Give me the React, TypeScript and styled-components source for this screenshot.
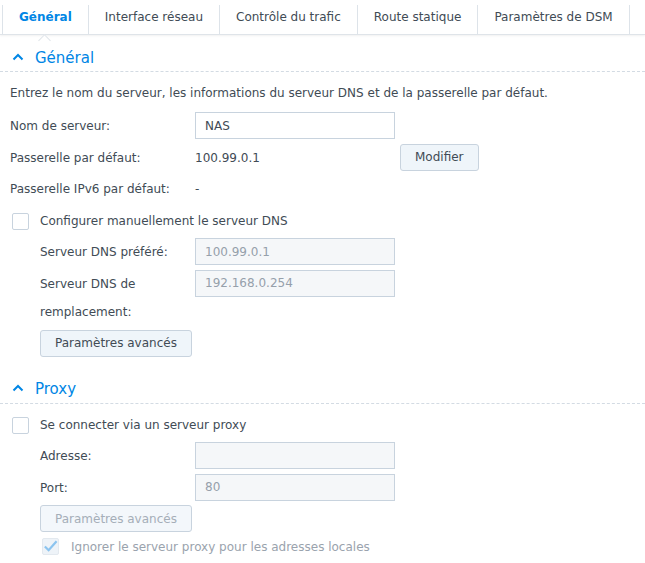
import React from 'react';
import styled, { createGlobalStyle } from 'styled-components';

const TEXT = '#414b55';
const BLUE = '#0086e5';
const BORDER = '#c8d3de';

const GlobalStyle = createGlobalStyle`
    body {
        margin: 0;
        background: #fff;
        font-family: 'DejaVu Sans', Verdana, sans-serif;
        font-size: 12px;
        color: ${TEXT};
    }
`;

const tabs = ['Général', 'Interface réseau', 'Contrôle du trafic', 'Route statique', 'Paramètres de DSM'];

const Chevron: React.FC = () => (
    <svg width="12" height="8" viewBox="0 0 12 8">
        <path d="M1.5 6.5 L6 2 L10.5 6.5" fill="none" stroke={BLUE} strokeWidth="2" />
    </svg>
);

const Check: React.FC = () => (
    <svg width="16" height="14" viewBox="0 0 16 14">
        <path d="M2 7.5 L6 11.5 L14.5 2" fill="none" stroke="#8cc4ef" strokeWidth="2.4" />
    </svg>
);

const App: React.FC = () => {
    return (
        <>
            <GlobalStyle />
            <Page>
                <TabBar>
                    {tabs.map((tab, i) => (
                        <Tab key={tab} active={i === 0}>
                            {tab}
                        </Tab>
                    ))}
                </TabBar>

                <SectionHeader>
                    <Chevron />
                    <span>Général</span>
                </SectionHeader>
                <Body>
                    <Description>
                        Entrez le nom du serveur, les informations du serveur DNS et de la passerelle par défaut.
                    </Description>
                    <Rows>
                        <Row>
                            <Label>Nom de serveur:</Label>
                            <Input defaultValue="NAS" />
                        </Row>
                        <Row>
                            <Label>Passerelle par défaut:</Label>
                            <Value>100.99.0.1</Value>
                            <Button>Modifier</Button>
                        </Row>
                        <Row>
                            <Label>Passerelle IPv6 par défaut:</Label>
                            <Value>-</Value>
                        </Row>
                        <Row>
                            <CheckBox />
                            <CheckLabel>Configurer manuellement le serveur DNS</CheckLabel>
                        </Row>
                        <Row indent>
                            <Label indent>Serveur DNS préféré:</Label>
                            <Input disabled defaultValue="100.99.0.1" />
                        </Row>
                        <Row indent>
                            <Label indent>Serveur DNS de remplacement:</Label>
                            <Input disabled defaultValue="192.168.0.254" />
                        </Row>
                        <Row indent>
                            <Button wide>Paramètres avancés</Button>
                        </Row>
                    </Rows>
                </Body>

                <SectionHeader spaced>
                    <Chevron />
                    <span>Proxy</span>
                </SectionHeader>
                <Body>
                    <Rows>
                        <Row>
                            <CheckBox />
                            <CheckLabel>Se connecter via un serveur proxy</CheckLabel>
                        </Row>
                        <Row indent>
                            <Label indent>Adresse:</Label>
                            <Input disabled defaultValue="" />
                        </Row>
                        <Row indent>
                            <Label indent>Port:</Label>
                            <Input disabled defaultValue="80" />
                        </Row>
                        <Row indent>
                            <Button wide disabled>
                                Paramètres avancés
                            </Button>
                        </Row>
                        <Row indent short>
                            <CheckBox checked disabled>
                                <Check />
                            </CheckBox>
                            <CheckLabel disabled>Ignorer le serveur proxy pour les adresses locales</CheckLabel>
                        </Row>
                    </Rows>
                </Body>
            </Page>
        </>
    );
};

const Page = styled.div`
    width: 645px;
    height: 563px;
    overflow: hidden;
`;

const TabBar = styled.div`
    display: flex;
    height: 34px;
    padding-left: 2px;
    border-bottom: 1px solid #dfe4e9;
    box-shadow: 0 1px 2px rgba(0, 0, 0, 0.06);
`;

const Tab = styled.div<{ active?: boolean }>`
    position: relative;
    display: flex;
    align-items: center;
    padding: 0 16px 5px;
    margin: 5px 0 0;
    height: 24px;
    border-left: 1px solid #dde3e9;
    color: ${(p) => (p.active ? BLUE : TEXT)};
    font-weight: ${(p) => (p.active ? 700 : 400)};
    white-space: nowrap;
    &:last-child {
        border-right: 1px solid #dde3e9;
    }
    ${(p) =>
        p.active
            ? `
        &::after {
            content: '';
            position: absolute;
            left: 50%;
            bottom: -11px;
            width: 8px;
            height: 8px;
            margin-left: -5px;
            background: #fff;
            border-left: 1px solid #dfe4e9;
            border-top: 1px solid #dfe4e9;
            transform: rotate(45deg);
        }
    `
            : ''}
`;

const SectionHeader = styled.div<{ spaced?: boolean }>`
    display: flex;
    align-items: center;
    gap: 11px;
    height: 27px;
    padding-top: 1px;
    margin-top: ${(p) => (p.spaced ? '17px' : '8px')};
    padding-left: 12px;
    border-bottom: 1px dashed #d3dbe3;
    color: ${BLUE};
    font-size: 15px;
    svg {
        margin-top: -2px;
    }
`;

const Body = styled.div`
    padding: 7px 10px 0;
`;

const Description = styled.div`
    line-height: 28px;
    margin-bottom: 5px;
`;

const Rows = styled.div`
    display: flex;
    flex-direction: column;
    gap: 3.6px;
`;

const Row = styled.div<{ indent?: boolean; short?: boolean }>`
    display: flex;
    align-items: flex-start;
    min-height: ${(p) => (p.short ? '22px' : '28px')};
    padding-left: ${(p) => (p.indent ? '30px' : '0')};
`;

const Label = styled.div<{ indent?: boolean }>`
    width: ${(p) => (p.indent ? '155px' : '185px')};
    flex-shrink: 0;
    line-height: 28px;
`;

const Value = styled.div`
    line-height: 28px;
    width: 205px;
`;

const Input = styled.input`
    box-sizing: border-box;
    width: 200px;
    height: 27px;
    padding: 0 9px;
    border: 1px solid ${BORDER};
    border-radius: 0;
    background: #fff;
    font-family: inherit;
    font-size: 12px;
    color: ${TEXT};
    outline: none;
    &:disabled {
        background: #f5f7f9;
        color: #96a0ab;
    }
`;

const Button = styled.button<{ wide?: boolean }>`
    box-sizing: border-box;
    height: 27px;
    padding: 0 14px;
    min-width: ${(p) => (p.wide ? '151px' : '78px')};
    border: 1px solid ${BORDER};
    border-radius: 3px;
    background: #eff5fa;
    font-family: inherit;
    font-size: 12px;
    color: ${TEXT};
    &:disabled {
        color: #a5aeb8;
        background: #f3f7fb;
    }
`;

const CheckBox = styled.div<{ checked?: boolean; disabled?: boolean }>`
    box-sizing: border-box;
    flex-shrink: 0;
    display: flex;
    align-items: center;
    justify-content: center;
    width: 17px;
    height: 17px;
    margin: ${(p) => (p.checked ? '1px 12px 0 2px' : '6px 11px 0 2px')};
    border: 1px solid ${(p) => (p.checked ? '#e3e9ef' : BORDER)};
    border-radius: 2px;
    background: ${(p) => (p.checked ? '#eef3f8' : '#fff')};
`;

const CheckLabel = styled.div<{ disabled?: boolean }>`
    line-height: ${(p) => (p.disabled ? '20px' : '28px')};
    color: ${(p) => (p.disabled ? '#9aa3ad' : TEXT)};
`;

export default App;
